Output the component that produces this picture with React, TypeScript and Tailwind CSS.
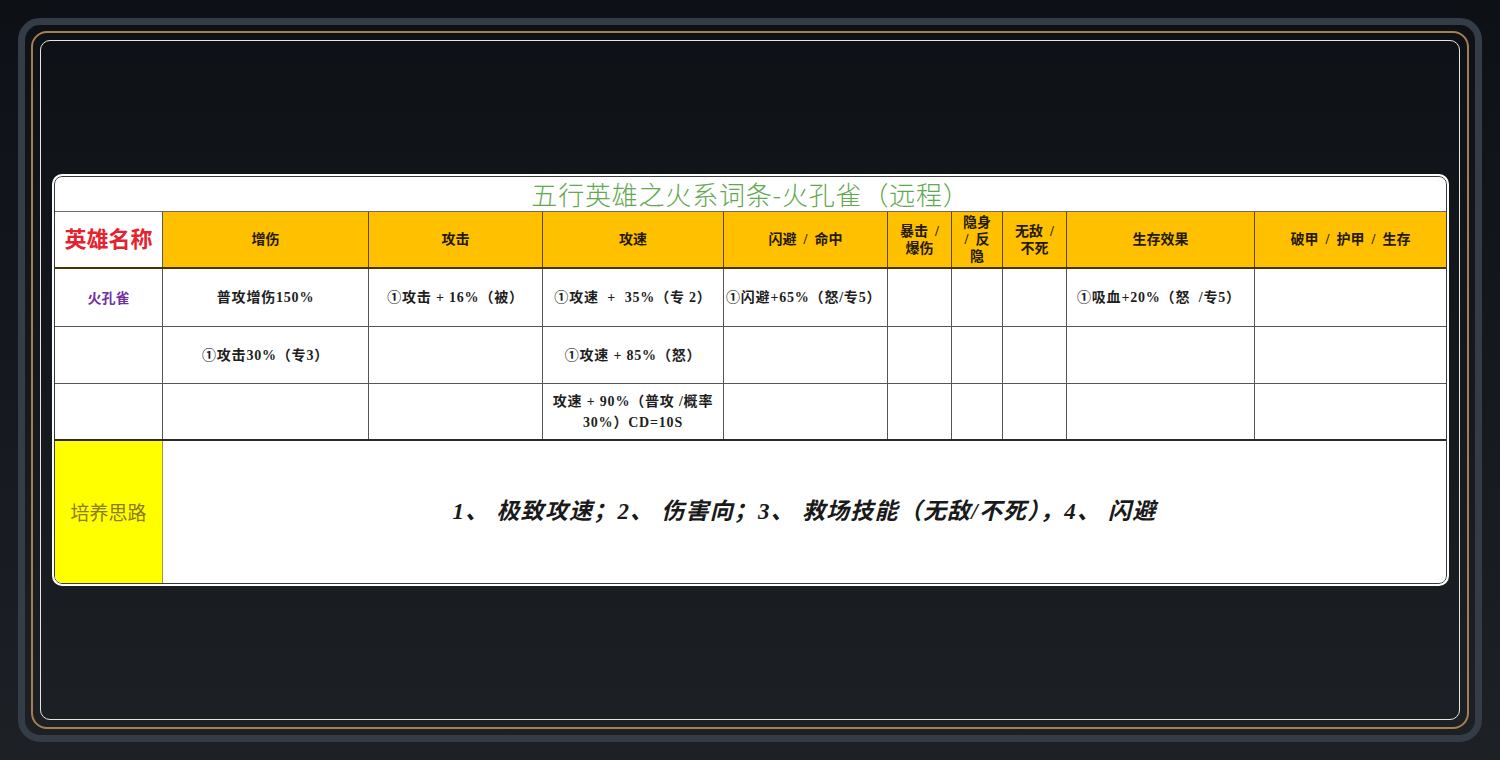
import React from "react";

const cols = "grid grid-cols-[108px_206px_174px_181px_164px_64px_51px_64px_188px_191px]";
const serif = "font-['Liberation_Serif','Noto_Sans_CJK_SC',serif]";

const headers = [
  ["增伤"],
  ["攻击"],
  ["攻速"],
  ["闪避  /  命中"],
  ["暴击  /", "爆伤"],
  ["隐身", "/  反", "隐"],
  ["无敌  /", "不死"],
  ["生存效果"],
  ["破甲  /  护甲  /  生存"],
];

type Cell = { lines?: string[]; align?: "center" | "left" };

const rows: Cell[][] = [
  [
    { lines: ["普攻增伤150%"] },
    { lines: ["①攻击 + 16%（被）"] },
    { lines: ["①攻速  +  35%（专 2）"] },
    { lines: ["①闪避+65%（怒/专5）"], align: "left" },
    {},
    {},
    {},
    { lines: ["①吸血+20%（怒  /专5）"], align: "left" },
    {},
  ],
  [
    { lines: ["①攻击30%（专3）"] },
    {},
    { lines: ["①攻速 + 85%（怒）"] },
    {},
    {},
    {},
    {},
    {},
    {},
  ],
  [
    {},
    {},
    { lines: ["攻速 + 90%（普攻 /概率", "30%）CD=10S"] },
    {},
    {},
    {},
    {},
    {},
    {},
  ],
];

const names = ["火孔雀", "", ""];
const rowHeights = ["h-[58px] border-b", "h-[57px] border-b", "h-[57px] border-b-2 border-b-[#2a2a2a]"];

export default function App() {
  return (
    <div className="w-[1500px] h-[760px] bg-gradient-to-b from-[#0d1015] to-[#1d2024] p-[18px]">
      <div className="h-full rounded-[22px] border-[7px] border-[#343d45] p-[6px]">
        <div className="h-full rounded-[16px] border-2 border-[#a57f52] p-[7px]">
          <div className="h-full rounded-[10px] border border-[#e6e6e0] flex items-center pl-[11px]">
            <div className={`w-[1397px] rounded-[10px] border-2 border-white bg-white overflow-hidden ${serif}`}>
              <div className="border border-[#3a3a3a] rounded-[8px] overflow-hidden">
                {/* title */}
                <div className="h-[35px] border-b border-[#6a6a6a] flex items-center justify-center">
                  <span className="text-[26px] leading-[34px] text-[#62a84e] font-['Noto_Sans_CJK_SC',sans-serif] font-light tracking-[0.8px]">
                    五行英雄之火系词条-火孔雀（远程）
                  </span>
                </div>

                {/* header */}
                <div className={`${cols} h-[57px] border-b-2 border-[#4a3400]`}>
                  <div className="flex items-center justify-center bg-white border-r border-[#5a5a5a]">
                    <span className="text-[22px] font-bold text-[#e5222e]">英雄名称</span>
                  </div>
                  {headers.map((h, i) => (
                    <div
                      key={i}
                      className={`flex flex-col items-center justify-center bg-[#ffc000] text-[14px] leading-[17px] font-bold text-[#241a00] ${
                        i < headers.length - 1 ? "border-r border-[#5a4a1a]" : ""
                      }`}
                    >
                      {h.map((l, j) => (
                        <span key={j} className="whitespace-pre">
                          {l}
                        </span>
                      ))}
                    </div>
                  ))}
                </div>

                {/* data rows */}
                {rows.map((r, ri) => (
                  <div key={ri} className={`${cols} ${rowHeights[ri]} border-[#555]`}>
                    <div className="flex items-center justify-center border-r border-[#555]">
                      <span className="text-[14px] font-bold text-[#7030a0] font-['Noto_Sans_CJK_SC',sans-serif]">
                        {names[ri]}
                      </span>
                    </div>
                    {r.map((c, ci) => (
                      <div
                        key={ci}
                        className={`flex flex-col justify-center text-[14px] leading-[21px] font-bold tracking-[0.8px] text-[#1e1e1e] ${
                          c.align === "left" ? "items-start pl-[2px]" : "items-center"
                        } ${ci < r.length - 1 ? "border-r border-[#555]" : ""} ${ci === 7 ? "pl-[10px]" : ""}`}
                      >
                        {(c.lines ?? []).map((l, li) => (
                          <span key={li} className="whitespace-pre">
                            {l}
                          </span>
                        ))}
                      </div>
                    ))}
                  </div>
                ))}

                {/* bottom row */}
                <div className="flex h-[142px]">
                  <div className="w-[108px] bg-[#ffff00] border-r border-[#a89a30] flex items-center justify-center">
                    <span className="text-[19px] text-[#8c7a1c] font-['Noto_Sans_CJK_SC',sans-serif]">培养思路</span>
                  </div>
                  <div className="flex-1 flex items-center justify-center">
                    <span className="text-[23px] font-bold italic text-[#1a1a1a] tracking-[1.2px] whitespace-pre">
                      1、 极致攻速；2、 伤害向；3、 救场技能（无敌/不死），4、 闪避
                    </span>
                  </div>
                </div>
              </div>
            </div>
          </div>
        </div>
      </div>
    </div>
  );
}
